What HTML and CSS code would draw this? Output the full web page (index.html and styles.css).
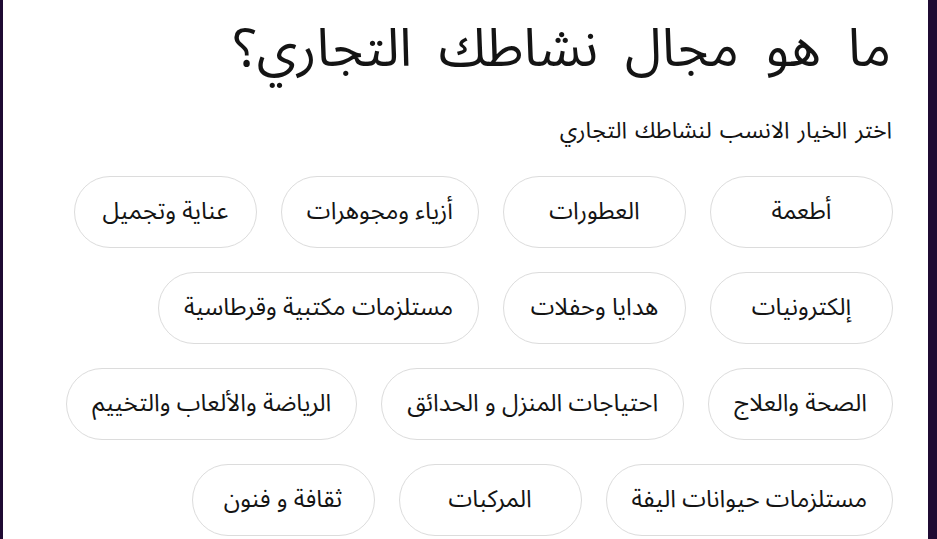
FILE: index.html
```html
<!DOCTYPE html>
<html lang="ar" dir="rtl">
  <head>
    <meta charset="UTF-8" />
    <meta name="viewport" content="width=device-width, initial-scale=1.0" />
    <title>مجال النشاط التجاري</title>
    <link rel="stylesheet" href="styles.css">
  </head>
  <body>
    <main class="step">
      <h1 class="step-title">ما هو مجال نشاطك التجاري؟</h1>
      <p class="step-hint">اختر الخيار الانسب لنشاطك التجاري</p>
      <div class="options">
        <button class="option">أطعمة</button>
        <button class="option">العطورات</button>
        <button class="option">أزياء ومجوهرات</button>
        <button class="option">عناية وتجميل</button>
        <button class="option">إلكترونيات</button>
        <button class="option">هدايا وحفلات</button>
        <button class="option">مستلزمات مكتبية وقرطاسية</button>
        <button class="option">الصحة والعلاج</button>
        <button class="option">احتياجات المنزل و الحدائق</button>
        <button class="option">الرياضة والألعاب والتخييم</button>
        <button class="option">مستلزمات حيوانات اليفة</button>
        <button class="option">المركبات</button>
        <button class="option">ثقافة و فنون</button>
      </div>
    </main>
  </body>
</html>
```

FILE: styles.css
```css
html,
body {
  margin: 0;
  height: 100%;
}
body {
  font-family: "Noto Sans Arabic", "DejaVu Sans", sans-serif;
  color: #141414;
  background-color: #fff;
  border-left: 3px solid #1f0b33;
  border-right: 9px solid #1f0b33;
  box-sizing: border-box;
  overflow: hidden;
}
.step {
  padding: 10px 37px 0 41px;
}
.step-title {
  margin: 0;
  font-size: 53px;
  font-weight: 400;
  line-height: 1.5;
  word-spacing: 13px;
}
.step-hint {
  margin: 25px -1px 29px 0;
  font-size: 23px;
  line-height: 1.4;
  word-spacing: 2px;
}
.options {
  display: flex;
  flex-wrap: wrap;
  gap: 24px;
  margin-right: -2px;
}
.option {
  font-family: inherit;
  font-size: 24px;
  color: #141414;
  background-color: #fff;
  min-width: 183px;
  height: 72px;
  padding: 0 25px;
  border: 1px solid #dcdcdc;
  border-radius: 36px;
  cursor: pointer;
}
.option:hover {
  border-color: #1f0b33;
}
```
